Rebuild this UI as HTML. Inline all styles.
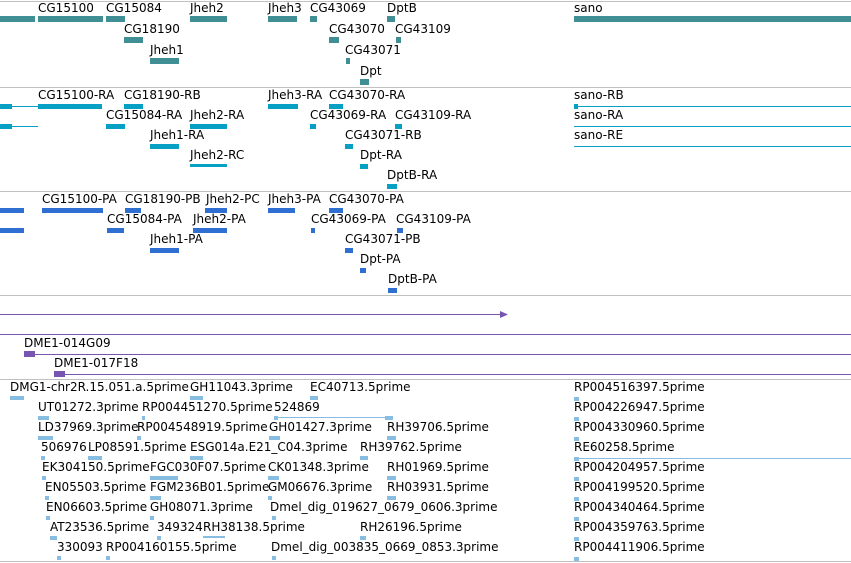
<!DOCTYPE html>
<html><head><meta charset="utf-8"><style>
body{margin:0;width:851px;height:563px;overflow:hidden;background:#fff;position:relative;font-family:"DejaVu Sans","Liberation Sans",sans-serif;font-size:12px;color:#000}
div{position:absolute}
.t{white-space:nowrap;line-height:14px}
.h{left:0;width:851px;height:1px;background:#c0c0c0}
.a{background:#3f8f94;height:6px}
.c{background:#05a0c3;height:5px}
.cl{background:#05a0c3;height:1px}
.d{background:#2e6fd1;height:5px}
.p{background:#7656b0}
.e{background:#88bde2;height:4px}
.el{background:#88bde2;height:1px}
</style></head><body>
<div class="h" style="top:1px"></div>
<div class="h" style="top:87px"></div>
<div class="h" style="top:191px"></div>
<div class="h" style="top:295px"></div>
<div class="h" style="top:379px"></div>
<div class="h" style="top:561px"></div>

<!-- track 1 -->
<div class="t" style="left:38px;top:1px">CG15100</div>
<div class="t" style="left:106px;top:1px">CG15084</div>
<div class="t" style="left:190px;top:1px">Jheh2</div>
<div class="t" style="left:268px;top:1px">Jheh3</div>
<div class="t" style="left:310px;top:1px">CG43069</div>
<div class="t" style="left:387px;top:1px">DptB</div>
<div class="t" style="left:574px;top:1px">sano</div>
<div class="t" style="left:124px;top:22px">CG18190</div>
<div class="t" style="left:329px;top:22px">CG43070</div>
<div class="t" style="left:395px;top:22px">CG43109</div>
<div class="t" style="left:150px;top:43px">Jheh1</div>
<div class="t" style="left:345px;top:43px">CG43071</div>
<div class="t" style="left:360px;top:64px">Dpt</div>
<div class="a" style="left:0;top:16px;width:35px"></div>
<div class="a" style="left:38px;top:16px;width:65px"></div>
<div class="a" style="left:106px;top:16px;width:19px"></div>
<div class="a" style="left:190px;top:16px;width:37px"></div>
<div class="a" style="left:268px;top:16px;width:29px"></div>
<div class="a" style="left:310px;top:16px;width:7px"></div>
<div class="a" style="left:387px;top:16px;width:8px"></div>
<div class="a" style="left:574px;top:16px;width:277px"></div>
<div class="a" style="left:124px;top:37px;width:19px"></div>
<div class="a" style="left:329px;top:37px;width:10px"></div>
<div class="a" style="left:396px;top:37px;width:5px"></div>
<div class="a" style="left:150px;top:58px;width:29px"></div>
<div class="a" style="left:346px;top:58px;width:4px"></div>
<div class="a" style="left:360px;top:79px;width:9px"></div>

<!-- track 2 -->
<div class="t" style="left:38px;top:88px">CG15100-RA</div>
<div class="t" style="left:124px;top:88px">CG18190-RB</div>
<div class="t" style="left:268px;top:88px">Jheh3-RA</div>
<div class="t" style="left:329px;top:88px">CG43070-RA</div>
<div class="t" style="left:574px;top:88px">sano-RB</div>
<div class="t" style="left:106px;top:108px">CG15084-RA</div>
<div class="t" style="left:190px;top:108px">Jheh2-RA</div>
<div class="t" style="left:310px;top:108px">CG43069-RA</div>
<div class="t" style="left:395px;top:108px">CG43109-RA</div>
<div class="t" style="left:574px;top:108px">sano-RA</div>
<div class="t" style="left:150px;top:128px">Jheh1-RA</div>
<div class="t" style="left:345px;top:128px">CG43071-RB</div>
<div class="t" style="left:574px;top:128px">sano-RE</div>
<div class="t" style="left:190px;top:148px">Jheh2-RC</div>
<div class="t" style="left:360px;top:148px">Dpt-RA</div>
<div class="t" style="left:387px;top:168px">DptB-RA</div>
<div class="c" style="left:0;top:104px;width:12px"></div><div class="cl" style="left:12px;top:106px;width:26px"></div>
<div class="c" style="left:38px;top:104px;width:64px"></div>
<div class="c" style="left:124px;top:104px;width:19px"></div>
<div class="c" style="left:268px;top:104px;width:30px"></div>
<div class="c" style="left:329px;top:104px;width:14px"></div>
<div class="c" style="left:574px;top:104px;width:4px"></div><div class="cl" style="left:574px;top:106px;width:277px"></div>
<div class="c" style="left:0;top:124px;width:12px"></div><div class="cl" style="left:12px;top:126px;width:26px"></div>
<div class="c" style="left:106px;top:124px;width:19px"></div>
<div class="c" style="left:190px;top:124px;width:37px"></div>
<div class="c" style="left:310px;top:124px;width:6px"></div>
<div class="c" style="left:395px;top:124px;width:7px"></div>
<div class="cl" style="left:574px;top:126px;width:277px"></div>
<div class="c" style="left:150px;top:144px;width:29px"></div>
<div class="c" style="left:345px;top:144px;width:8px"></div>
<div class="cl" style="left:574px;top:146px;width:277px"></div>
<div class="c" style="left:190px;top:164px;width:37px;height:3px"></div>
<div class="c" style="left:360px;top:164px;width:8px"></div>
<div class="c" style="left:387px;top:184px;width:10px"></div>

<!-- track 3 -->
<div class="t" style="left:42px;top:192px">CG15100-PA</div>
<div class="t" style="left:125px;top:192px">CG18190-PB</div>
<div class="t" style="left:206px;top:192px">Jheh2-PC</div>
<div class="t" style="left:268px;top:192px">Jheh3-PA</div>
<div class="t" style="left:329px;top:192px">CG43070-PA</div>
<div class="t" style="left:107px;top:212px">CG15084-PA</div>
<div class="t" style="left:193px;top:212px">Jheh2-PA</div>
<div class="t" style="left:311px;top:212px">CG43069-PA</div>
<div class="t" style="left:396px;top:212px">CG43109-PA</div>
<div class="t" style="left:150px;top:232px">Jheh1-PA</div>
<div class="t" style="left:345px;top:232px">CG43071-PB</div>
<div class="t" style="left:360px;top:252px">Dpt-PA</div>
<div class="t" style="left:388px;top:272px">DptB-PA</div>
<div class="d" style="left:0;top:208px;width:24px"></div>
<div class="d" style="left:42px;top:208px;width:61px"></div>
<div class="d" style="left:125px;top:208px;width:16px"></div>
<div class="d" style="left:205px;top:208px;width:22px"></div>
<div class="d" style="left:268px;top:208px;width:27px"></div>
<div class="d" style="left:329px;top:208px;width:14px"></div>
<div class="d" style="left:0;top:228px;width:24px"></div>
<div class="d" style="left:107px;top:228px;width:17px"></div>
<div class="d" style="left:193px;top:228px;width:34px"></div>
<div class="d" style="left:311px;top:228px;width:4px"></div>
<div class="d" style="left:397px;top:228px;width:6px"></div>
<div class="d" style="left:150px;top:248px;width:29px"></div>
<div class="d" style="left:345px;top:248px;width:8px"></div>
<div class="d" style="left:360px;top:268px;width:6px"></div>
<div class="d" style="left:388px;top:288px;width:9px"></div>

<!-- track 4 -->
<div class="p" style="left:0;top:314px;width:505px;height:1px"></div>
<div class="p" style="left:500px;top:311px;width:8px;height:7px;clip-path:polygon(0 0,100% 50%,0 100%)"></div>
<div class="p" style="left:0;top:334px;width:851px;height:1px"></div>
<div class="t" style="left:24px;top:336px">DME1-014G09</div>
<div class="p" style="left:24px;top:354px;width:827px;height:1px"></div>
<div class="p" style="left:24px;top:351px;width:11px;height:6px"></div>
<div class="t" style="left:54px;top:356px">DME1-017F18</div>
<div class="p" style="left:54px;top:374px;width:797px;height:1px"></div>
<div class="p" style="left:54px;top:371px;width:11px;height:6px"></div>

<!-- track 5 -->
<div class="t" style="left:10px;top:380px">DMG1-chr2R.15.051.a.5prime</div>
<div class="t" style="left:190px;top:380px">GH11043.3prime</div>
<div class="t" style="left:310px;top:380px">EC40713.5prime</div>
<div class="t" style="left:574px;top:380px">RP004516397.5prime</div>
<div class="t" style="left:38px;top:400px">UT01272.3prime</div>
<div class="t" style="left:142px;top:400px">RP004451270.5prime</div>
<div class="t" style="left:274px;top:400px">524869</div>
<div class="t" style="left:574px;top:400px">RP004226947.5prime</div>
<div class="t" style="left:38px;top:420px">LD37969.3prime</div>
<div class="t" style="left:137px;top:420px">RP004548919.5prime</div>
<div class="t" style="left:269px;top:420px">GH01427.3prime</div>
<div class="t" style="left:387px;top:420px">RH39706.5prime</div>
<div class="t" style="left:574px;top:420px">RP004330960.5prime</div>
<div class="t" style="left:41px;top:440px">506976</div>
<div class="t" style="left:88px;top:440px">LP08591.5prime</div>
<div class="t" style="left:190px;top:440px">ESG014a.E21_C04.3prime</div>
<div class="t" style="left:360px;top:440px">RH39762.5prime</div>
<div class="t" style="left:574px;top:440px">RE60258.5prime</div>
<div class="t" style="left:42px;top:460px">EK304150.5prime</div>
<div class="t" style="left:150px;top:460px">FGC030F07.5prime</div>
<div class="t" style="left:268px;top:460px">CK01348.3prime</div>
<div class="t" style="left:387px;top:460px">RH01969.5prime</div>
<div class="t" style="left:574px;top:460px">RP004204957.5prime</div>
<div class="t" style="left:45px;top:480px">EN05503.5prime</div>
<div class="t" style="left:150px;top:480px">FGM236B01.5prime</div>
<div class="t" style="left:268px;top:480px">GM06676.3prime</div>
<div class="t" style="left:387px;top:480px">RH03931.5prime</div>
<div class="t" style="left:574px;top:480px">RP004199520.5prime</div>
<div class="t" style="left:46px;top:500px">EN06603.5prime</div>
<div class="t" style="left:150px;top:500px">GH08071.3prime</div>
<div class="t" style="left:270px;top:500px">Dmel_dig_019627_0679_0606.3prime</div>
<div class="t" style="left:574px;top:500px">RP004340464.5prime</div>
<div class="t" style="left:50px;top:520px">AT23536.5prime</div>
<div class="t" style="left:157px;top:520px">349324</div>
<div class="t" style="left:203px;top:520px">RH38138.5prime</div>
<div class="t" style="left:360px;top:520px">RH26196.5prime</div>
<div class="t" style="left:574px;top:520px">RP004359763.5prime</div>
<div class="t" style="left:57px;top:540px">330093</div>
<div class="t" style="left:106px;top:540px">RP004160155.5prime</div>
<div class="t" style="left:271px;top:540px">Dmel_dig_003835_0669_0853.3prime</div>
<div class="t" style="left:574px;top:540px">RP004411906.5prime</div>

<div class="e" style="left:10px;top:396px;width:14px"></div>
<div class="e" style="left:190px;top:396px;width:13px"></div>
<div class="e" style="left:310px;top:396px;width:8px"></div>
<div class="e" style="left:574px;top:397px;width:5px"></div>
<div class="e" style="left:38px;top:416px;width:11px"></div>
<div class="e" style="left:142px;top:416px;width:3px"></div>
<div class="e" style="left:274px;top:416px;width:4px"></div><div class="el" style="left:274px;top:417px;width:115px"></div><div class="e" style="left:385px;top:416px;width:8px"></div>
<div class="e" style="left:574px;top:417px;width:5px"></div>
<div class="e" style="left:38px;top:436px;width:15px"></div>
<div class="e" style="left:137px;top:436px;width:4px"></div>
<div class="e" style="left:269px;top:436px;width:11px"></div>
<div class="e" style="left:387px;top:436px;width:9px"></div>
<div class="e" style="left:574px;top:437px;width:5px"></div>
<div class="e" style="left:41px;top:456px;width:4px"></div>
<div class="e" style="left:88px;top:456px;width:14px"></div>
<div class="e" style="left:190px;top:456px;width:13px"></div>
<div class="e" style="left:360px;top:456px;width:8px"></div>
<div class="e" style="left:574px;top:457px;width:5px"></div><div class="el" style="left:574px;top:458px;width:277px"></div>
<div class="e" style="left:42px;top:476px;width:4px"></div>
<div class="e" style="left:150px;top:476px;width:28px"></div>
<div class="e" style="left:268px;top:476px;width:11px"></div>
<div class="e" style="left:387px;top:476px;width:9px"></div>
<div class="e" style="left:574px;top:477px;width:5px"></div>
<div class="e" style="left:45px;top:496px;width:4px"></div>
<div class="e" style="left:150px;top:496px;width:11px"></div>
<div class="e" style="left:268px;top:496px;width:4px"></div>
<div class="e" style="left:387px;top:496px;width:9px"></div>
<div class="e" style="left:574px;top:497px;width:5px"></div>
<div class="e" style="left:46px;top:516px;width:4px"></div>
<div class="e" style="left:150px;top:516px;width:4px"></div>
<div class="e" style="left:272px;top:516px;width:4px"></div>
<div class="e" style="left:574px;top:517px;width:5px"></div>
<div class="e" style="left:50px;top:536px;width:7px"></div>
<div class="e" style="left:157px;top:536px;width:4px"></div>
<div class="e" style="left:203px;top:536px;width:22px;height:2px"></div>
<div class="e" style="left:360px;top:536px;width:6px"></div>
<div class="e" style="left:574px;top:537px;width:5px"></div>
<div class="e" style="left:57px;top:556px;width:4px"></div>
<div class="e" style="left:106px;top:556px;width:4px"></div>
<div class="e" style="left:272px;top:556px;width:4px"></div>
<div class="e" style="left:574px;top:557px;width:5px"></div>
</body></html>
